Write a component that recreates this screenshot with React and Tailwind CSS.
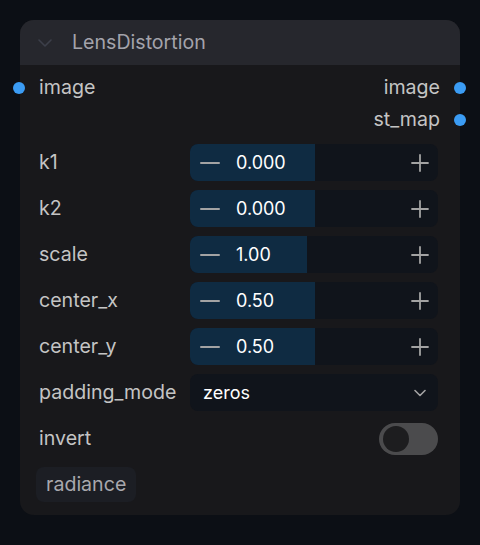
import React from "react";

const font = { fontFamily: "Inter, 'Noto Sans', sans-serif" };

function Minus() {
  return (
    <svg width="20" height="20" viewBox="0 0 20 20" className="shrink-0">
      <path d="M1 10h18" stroke="#a3a3a3" strokeWidth="2" strokeLinecap="round" />
    </svg>
  );
}
function Plus() {
  return (
    <svg width="18" height="18" viewBox="0 0 18 18" className="shrink-0">
      <path d="M1 9h16M9 1v16" stroke="#a3a3a3" strokeWidth="1.8" strokeLinecap="round" />
    </svg>
  );
}

function NumberWidget({ label, value, pct }) {
  return (
    <div className="flex items-center h-[37px]">
      <div className="w-[151px] text-[19.6px] text-[#c4c4c4]">{label}</div>
      <div className="relative flex-1 h-full rounded-lg bg-[#10141b] overflow-hidden">
        <div className="absolute left-0 top-0 bottom-0 bg-[#0f2b42]" style={{ width: pct + "%" }} />
        <div className="relative flex items-center h-full pl-[10px] pr-[9px]">
          <Minus />
          <span className="ml-[16px] text-[18px] text-white">{value}</span>
          <div className="flex-1" />
          <Plus />
        </div>
      </div>
    </div>
  );
}

export default function App() {
  return (
    <div className="w-[480px] h-[545px] bg-[#0c0f15] pt-[20px] pl-[20px]" style={font}>
      <div className="relative w-[440px] h-[495px] rounded-[14px] bg-[#18181b] flex flex-col">
        <div className="h-[45px] rounded-t-[14px] bg-[#26272d] flex items-center pl-[18px]">
          <svg width="14" height="8" viewBox="0 0 14 8">
            <path d="M1 1l6 6 6-6" fill="none" stroke="#3c3f4a" strokeWidth="1.6" strokeLinecap="round" strokeLinejoin="round" />
          </svg>
          <span className="ml-[20px] text-[19.6px] text-[#a3a3ab]">LensDistortion</span>
        </div>
        <div className="pt-[7px] flex flex-col">
          <div className="h-[32px] flex items-center justify-between">
            <div className="flex items-center">
              <span className="w-[12px] h-[12px] rounded-full bg-[#3b9cf4] -ml-[7px]" />
              <span className="ml-[14px] text-[19.6px] text-[#c4c4c4]">image</span>
            </div>
            <div className="flex items-center">
              <span className="text-[19.6px] text-[#c4c4c4]">image</span>
              <span className="w-[12px] h-[12px] rounded-full bg-[#3b9cf4] ml-[14px] -mr-[6px]" />
            </div>
          </div>
          <div className="h-[32px] flex items-center justify-end">
            <span className="text-[19.6px] text-[#c4c4c4]">st_map</span>
            <span className="w-[12px] h-[12px] rounded-full bg-[#3b9cf4] ml-[14px] -mr-[6px]" />
          </div>
        </div>
        <div className="mt-[8px] pl-[19px] pr-[22px] flex flex-col gap-[9px]">
          <NumberWidget label="k1" value="0.000" pct={50.5} />
          <NumberWidget label="k2" value="0.000" pct={50.5} />
          <NumberWidget label="scale" value="1.00" pct={47} />
          <NumberWidget label="center_x" value="0.50" pct={50.5} />
          <NumberWidget label="center_y" value="0.50" pct={50.5} />
          <div className="flex items-center h-[37px]">
            <div className="w-[151px] text-[19.6px] text-[#c4c4c4]">padding_mode</div>
            <div className="flex-1 h-full rounded-lg bg-[#10141b] flex items-center pl-[13px] pr-[12px]">
              <span className="text-[18px] text-white">zeros</span>
              <div className="flex-1" />
              <svg width="12" height="8" viewBox="0 0 12 8">
                <path d="M1 1.5l5 5 5-5" fill="none" stroke="#a3a3a3" strokeWidth="1.6" strokeLinecap="round" strokeLinejoin="round" />
              </svg>
            </div>
          </div>
          <div className="flex items-center h-[37px]">
            <div className="flex-1 text-[19.6px] text-[#c4c4c4]">invert</div>
            <div className="w-[59px] h-[32px] rounded-full bg-[#4b4b4d] flex items-center pl-[4px]">
              <div className="w-[26px] h-[26px] rounded-full bg-[#1d1d1f]" />
            </div>
          </div>
          <div className="flex items-center h-[37px]">
            <div className="h-[35px] rounded-lg bg-[#1c1e24] px-[10px] flex items-center -ml-[3px] text-[19.6px] text-[#a8a8ad]">radiance</div>
          </div>
        </div>
      </div>
    </div>
  );
}
